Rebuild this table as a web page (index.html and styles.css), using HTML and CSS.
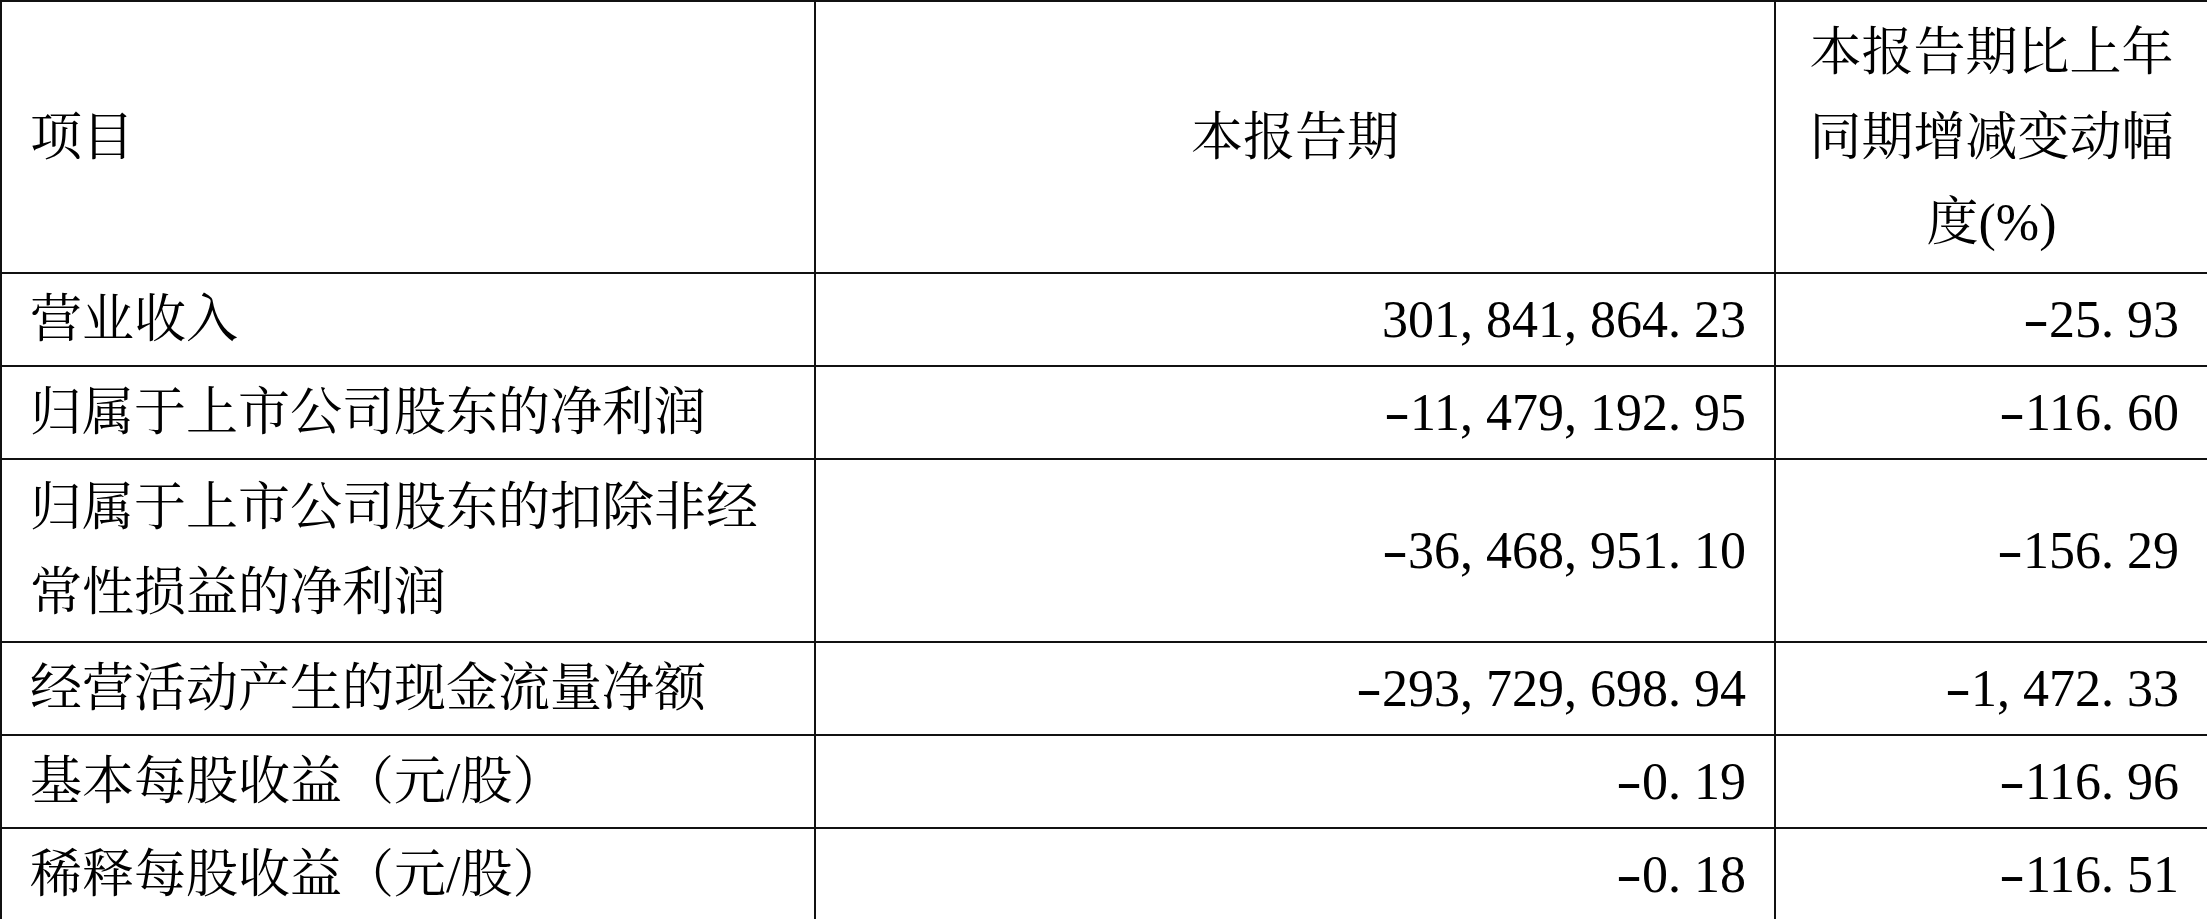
FILE: index.html
```html
<!DOCTYPE html>
<html lang="zh-CN">
<head>
<meta charset="utf-8">
<title>主要会计数据</title>
<link rel="stylesheet" href="styles.css">
</head>
<body>
<table class="data">
  <colgroup>
    <col class="c1">
    <col class="c2">
    <col class="c3">
  </colgroup>
  <thead>
    <tr class="head">
      <th class="label">项目</th>
      <th class="center">本报告期</th>
      <th class="center">本报告期比上年同期增减变动幅度(%)</th>
    </tr>
  </thead>
  <tbody>
    <tr>
      <td class="label">营业收入</td>
      <td class="num">301<span class="sep">,</span>841<span class="sep">,</span>864<span class="sep">.</span>23</td>
      <td class="num"><span class="neg">-</span>25<span class="sep">.</span>93</td>
    </tr>
    <tr>
      <td class="label">归属于上市公司股东的净利润</td>
      <td class="num"><span class="neg">-</span>11<span class="sep">,</span>479<span class="sep">,</span>192<span class="sep">.</span>95</td>
      <td class="num"><span class="neg">-</span>116<span class="sep">.</span>60</td>
    </tr>
    <tr class="tall">
      <td class="label">归属于上市公司股东的扣除非经常性损益的净利润</td>
      <td class="num"><span class="neg">-</span>36<span class="sep">,</span>468<span class="sep">,</span>951<span class="sep">.</span>10</td>
      <td class="num"><span class="neg">-</span>156<span class="sep">.</span>29</td>
    </tr>
    <tr>
      <td class="label">经营活动产生的现金流量净额</td>
      <td class="num"><span class="neg">-</span>293<span class="sep">,</span>729<span class="sep">,</span>698<span class="sep">.</span>94</td>
      <td class="num"><span class="neg">-</span>1<span class="sep">,</span>472<span class="sep">.</span>33</td>
    </tr>
    <tr>
      <td class="label">基本每股收益（元/股）</td>
      <td class="num"><span class="neg">-</span>0<span class="sep">.</span>19</td>
      <td class="num"><span class="neg">-</span>116<span class="sep">.</span>96</td>
    </tr>
    <tr>
      <td class="label">稀释每股收益（元/股）</td>
      <td class="num"><span class="neg">-</span>0<span class="sep">.</span>18</td>
      <td class="num"><span class="neg">-</span>116<span class="sep">.</span>51</td>
    </tr>
  </tbody>
</table>
</body>
</html>
```

FILE: styles.css
```css
html, body {
  margin: 0;
  padding: 0;
  background: #ffffff;
}

body {
  font-family: "Liberation Serif", "Noto Serif CJK SC", "Noto Sans CJK SC", serif;
  font-size: 52px;
  color: #000000;
}

.data {
  border-collapse: collapse;
  table-layout: fixed;
  width: 2207px;
}

.c1 { width: 814px; }
.c2 { width: 960px; }
.c3 { width: 433px; }

.data th,
.data td {
  border: 2px solid #111111;
  padding: 3px 28px 3px 28px;
  line-height: 85px;
  font-weight: normal;
  vertical-align: middle;
}

.data .head th {
  padding-top: 8px;
  padding-bottom: 7px;
}

.data .tall td {
  padding-top: 5px;
  padding-bottom: 6px;
}

.label {
  text-align: left;
}

.center {
  text-align: center;
}

.num {
  text-align: right;
  white-space: nowrap;
}

.sep {
  letter-spacing: 13px;
}

.neg {
  display: inline-block;
  width: 26px;
  text-align: center;
  transform: scaleX(1.5);
}
```
